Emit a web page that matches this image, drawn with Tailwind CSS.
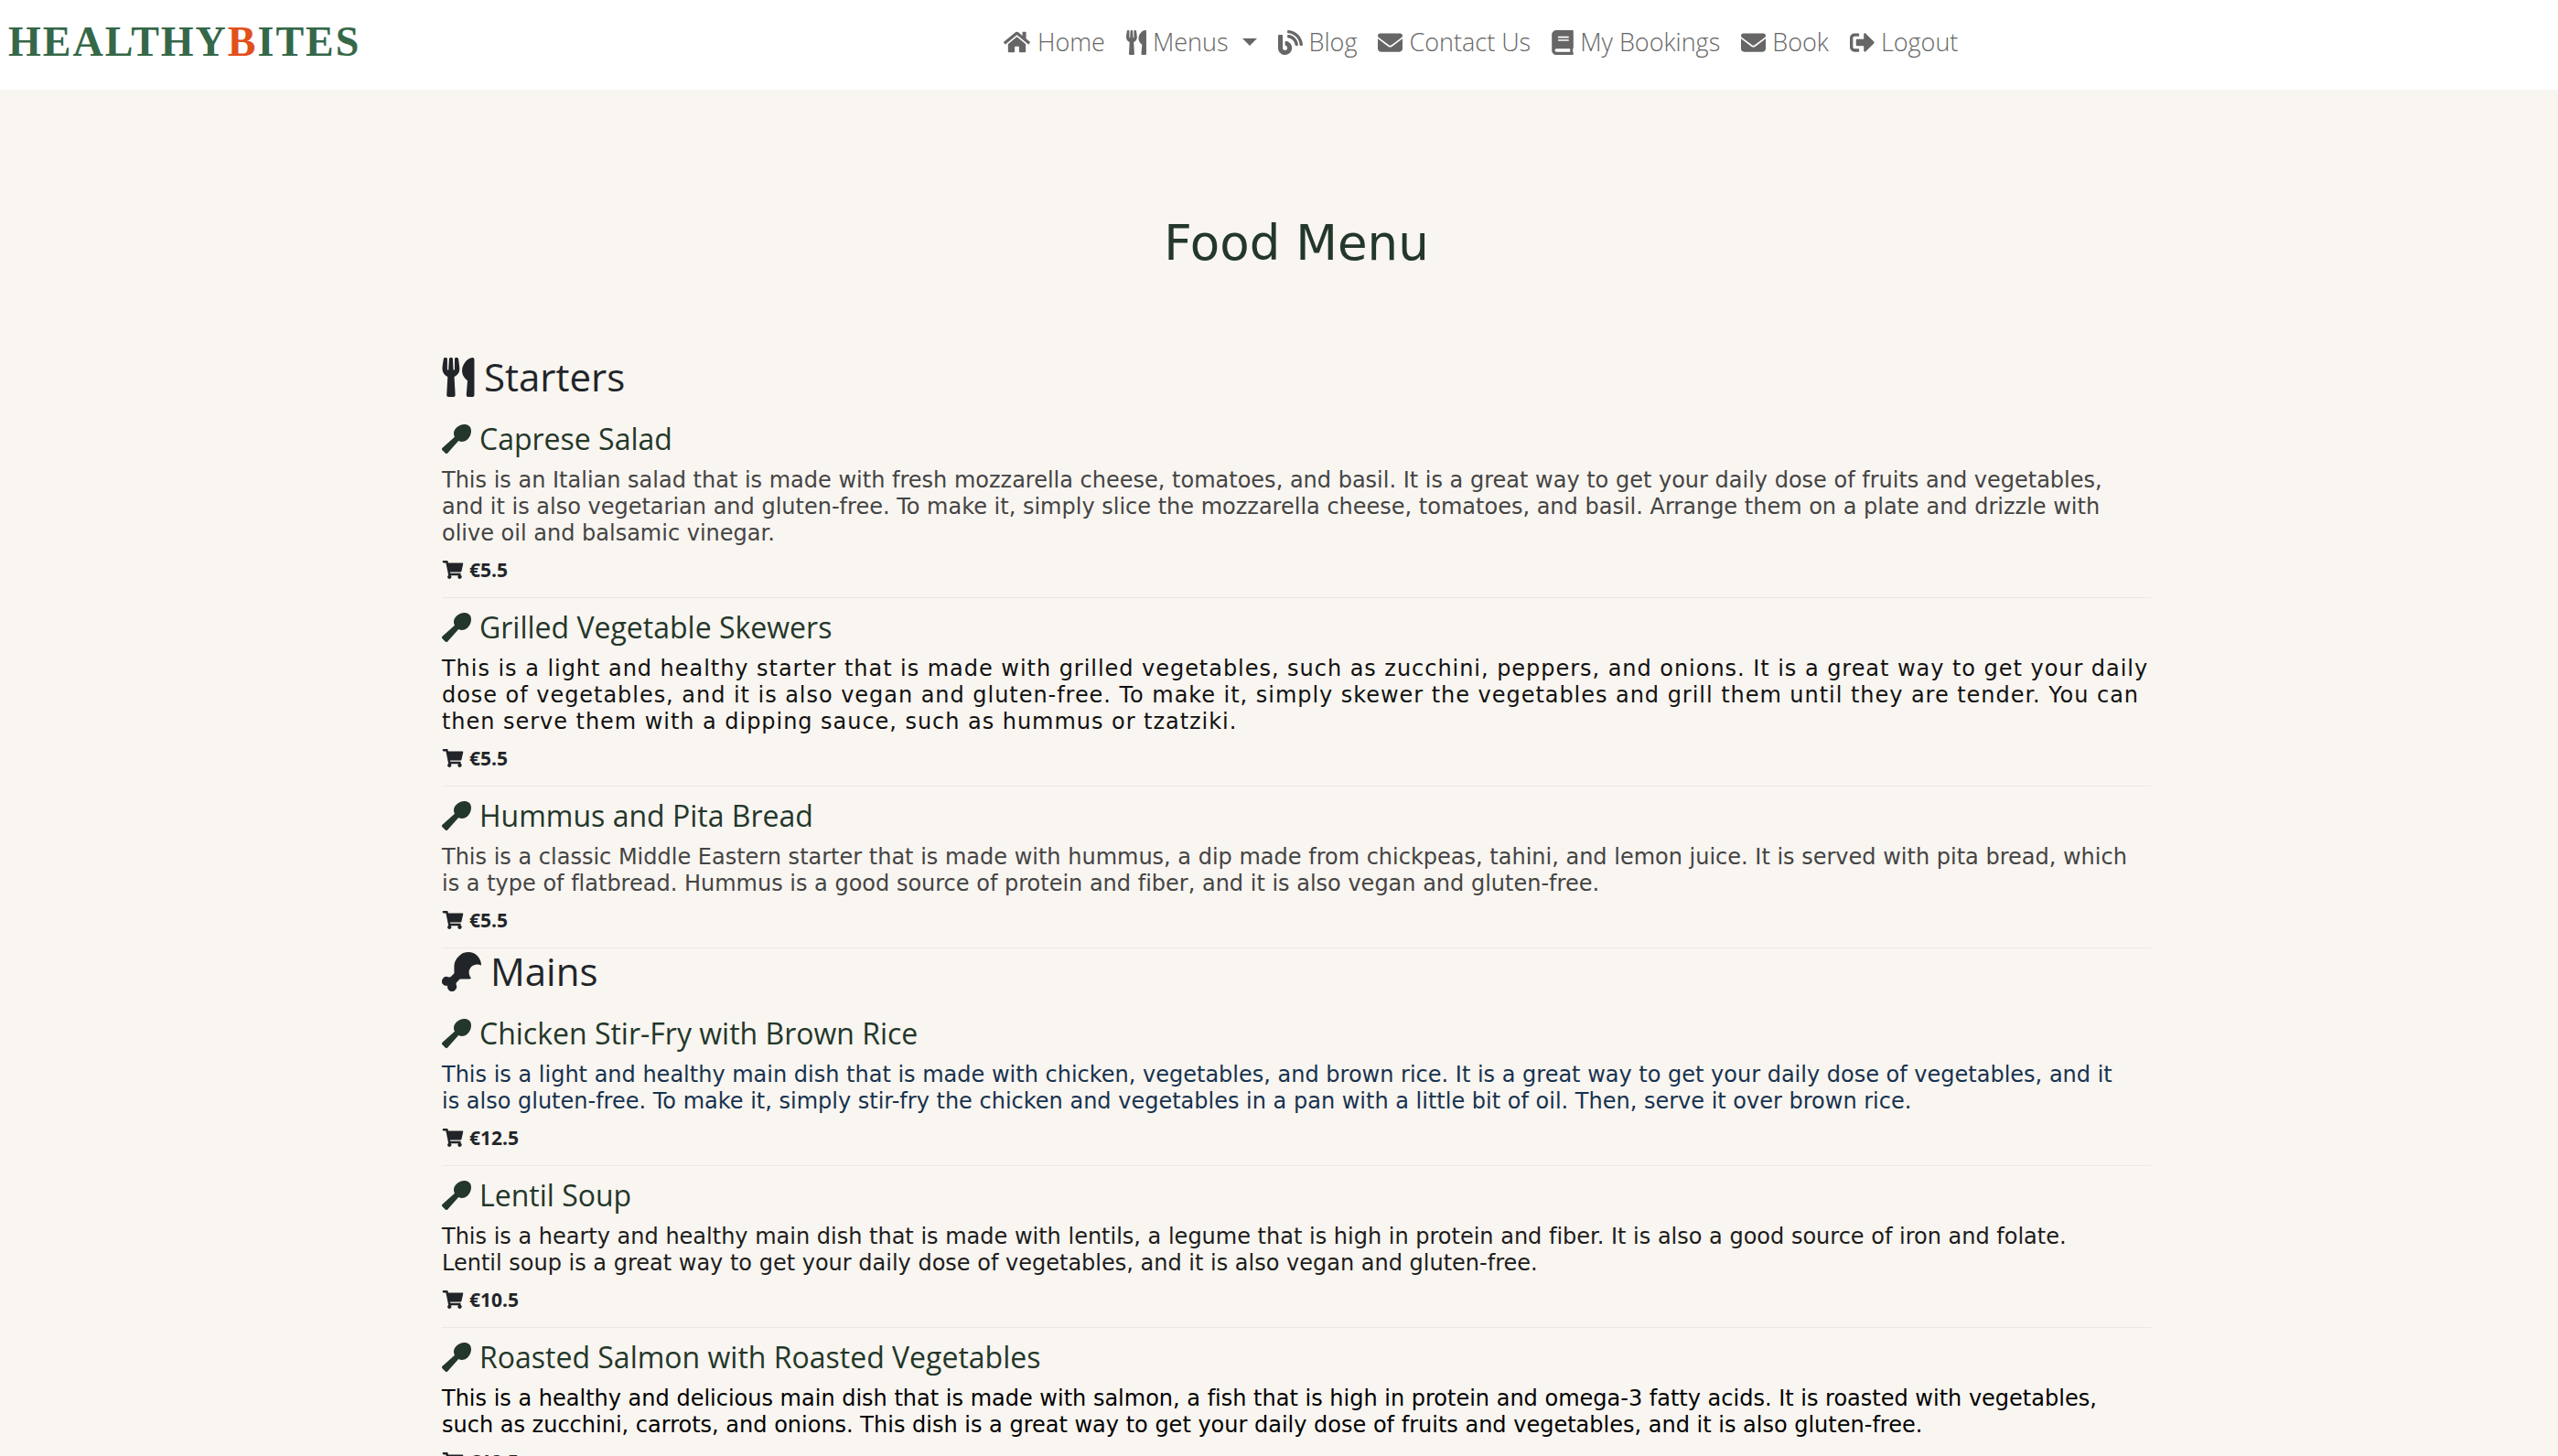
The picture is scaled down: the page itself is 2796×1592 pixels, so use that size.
<!DOCTYPE html>
<html lang="en">
<head>
<meta charset="utf-8">
<title>HealthyBites - Food Menu</title>
<script src="https://cdn.jsdelivr.net/npm/@tailwindcss/browser@4"></script>
</head>
<body class="min-h-screen bg-[#f9f5f0] font-['Open_Sans',sans-serif] text-[#212529] [font-variant-ligatures:none]">
<svg class="hidden" aria-hidden="true">
  <symbol id="home" viewBox="0 0 576 512"><path d="M280.37 148.26L96 300.11V464a16 16 0 0 0 16 16l112.06-.29a16 16 0 0 0 15.92-16V368a16 16 0 0 1 16-16h64a16 16 0 0 1 16 16v95.64a16 16 0 0 0 16 16.05L464 480a16 16 0 0 0 16-16V300L295.67 148.26a12.19 12.19 0 0 0-15.3 0zM571.6 251.47L488 182.56V44.05a12 12 0 0 0-12-12h-56a12 12 0 0 0-12 12v72.61L318.47 43a48 48 0 0 0-61 0L4.34 251.47a12 12 0 0 0-1.6 16.9l25.5 31A12 12 0 0 0 45.15 301l235.22-193.74a12.19 12.19 0 0 1 15.3 0L530.9 301a12 12 0 0 0 16.9-1.6l25.5-31a12 12 0 0 0-1.7-16.93z"/></symbol>
  <symbol id="utensils" viewBox="0 0 416 512"><path d="M207.9 15.2c.8 4.7 16.1 94.5 16.1 128.8 0 52.3-27.8 89.6-68.9 104.6L168 486.7c.7 13.7-10.2 25.3-24 25.3H80c-13.7 0-24.7-11.5-24-25.3l12.9-238.1C27.7 233.6 0 196.2 0 144 0 109.6 15.3 19.9 16.1 15.2 19.3-5.1 61.4-5.4 64 16.3v141.2c1.3 3.4 15.1 3.2 16 0 1.4-25.3 7.9-139.2 8-141.8 3.3-20.8 44.7-20.8 47.9 0 .2 2.7 6.6 116.5 8 141.8.9 3.2 14.8 3.4 16 0V16.3c2.6-21.6 44.8-21.4 48-1.1zm119.2 285.7l-15 185.1c-1.2 14 9.9 26 23.9 26h56c13.3 0 24-10.7 24-24V24c0-13.2-10.7-24-24-24-82.5 0-221.4 178.5-64.9 300.9z"/></symbol>
  <symbol id="blog" viewBox="0 0 512 512"><path d="M172.2 226.8c-14.6-2.9-28.2 8.9-28.2 23.8V301c0 10.2 7.1 18.4 16.7 22 18.2 6.8 31.3 24.4 31.3 45 0 26.5-21.5 48-48 48s-48-21.5-48-48V120c0-13.3-10.7-24-24-24H24c-13.3 0-24 10.7-24 24v248c0 89.5 82.1 160.2 175 140.7 54.4-11.4 98.3-55.4 109.7-109.7 17.4-82.9-37-157.2-112.5-172.2zM209 0c-9.2-.5-17 6.8-17 16v31.6c0 8.5 6.6 15.5 15 15.9 129.4 7 233.4 112 240.9 241.5.5 8.4 7.5 15 15.9 15h32.1c9.2 0 16.5-7.8 16-17C503.4 139.8 372.2 8.6 209 0zm.3 96c-9.3-.7-17.3 6.7-17.3 16.1v32.1c0 8.4 6.5 15.3 14.8 15.9 76.8 6.3 138 68.2 144.9 145.2.8 8.3 7.6 14.7 15.9 14.7h32.2c9.3 0 16.8-8 16.1-17.3-8.4-110.1-96.5-198.2-206.6-206.7z"/></symbol>
  <symbol id="envelope" viewBox="0 0 512 512"><path d="M48 64C21.5 64 0 85.5 0 112c0 15.1 7.1 29.3 19.2 38.4L236.8 313.6c11.4 8.5 27 8.5 38.4 0L492.8 150.4c12.1-9.1 19.2-23.3 19.2-38.4c0-26.5-21.5-48-48-48H48zM0 176V384c0 35.3 28.7 64 64 64H448c35.3 0 64-28.7 64-64V176L294.4 339.2c-22.8 17.1-54 17.1-76.8 0L0 176z"/></symbol>
  <symbol id="book" viewBox="0 0 448 512"><path d="M448 360V24c0-13.3-10.7-24-24-24H96C43 0 0 43 0 96v320c0 53 43 96 96 96h328c13.3 0 24-10.7 24-24v-16c0-7.5-3.5-14.3-8.9-18.7-4.2-15.4-4.2-59.3 0-74.7 5.4-4.3 8.9-11.1 8.9-18.6zM128 134c0-3.3 2.7-6 6-6h212c3.3 0 6 2.7 6 6v20c0 3.3-2.7 6-6 6H134c-3.3 0-6-2.7-6-6v-20zm0 64c0-3.3 2.7-6 6-6h212c3.3 0 6 2.7 6 6v20c0 3.3-2.7 6-6 6H134c-3.3 0-6-2.7-6-6v-20zm253.4 250H96c-17.7 0-32-14.3-32-32 0-17.6 14.4-32 32-32h285.4c-1.9 17.1-1.9 46.9 0 64z"/></symbol>
  <symbol id="logout" viewBox="0 0 512 512"><path d="M497 273L329 441c-15 15-41 4.5-41-17v-96H152c-13.3 0-24-10.7-24-24v-96c0-13.3 10.7-24 24-24h136V88c0-21.4 25.9-32 41-17l168 168c9.3 9.4 9.3 24.6 0 34zM192 436v-40c0-6.6-5.4-12-12-12H96c-17.7 0-32-14.3-32-32V160c0-17.7 14.3-32 32-32h84c6.6 0 12-5.4 12-12V76c0-6.6-5.4-12-12-12H96c-53 0-96 43-96 96v192c0 53 43 96 96 96h84c6.6 0 12-5.4 12-12z"/></symbol>
  <symbol id="cart" viewBox="0 0 576 512"><path d="M528.12 301.319l47.273-208C578.806 78.301 567.391 64 551.99 64H159.208l-9.166-44.81C147.758 8.021 137.93 0 126.529 0H24C10.745 0 0 10.745 0 24v16c0 13.255 10.745 24 24 24h69.883l70.248 343.435C147.325 417.1 136 435.222 136 456c0 30.928 25.072 56 56 56s56-25.072 56-56c0-15.674-6.447-29.835-16.824-40h209.647C430.447 426.165 424 440.326 424 456c0 30.928 25.072 56 56 56s56-25.072 56-56c0-22.172-12.888-41.332-31.579-50.405l5.517-24.276c3.413-15.018-8.002-29.319-23.403-29.319H218.117l-6.545-32h293.145c11.206 0 20.92-7.754 23.403-18.681z"/></symbol>
  <symbol id="spoon" viewBox="0 0 512 512"><path d="M480.1 31.9c-55-55.1-164.9-34.5-227.8 28.5-49.3 49.3-55.1 110-28.8 160.4L9 413.2c-11.6 10.5-12.1 28.5-1 39.5L59.3 504c11 11 29.1 10.5 39.5-1.1l192.4-214.4c50.4 26.3 111.1 20.5 160.4-28.8 63-62.9 83.6-172.8 28.5-227.8z"/></symbol>
  <symbol id="drumstick" viewBox="0 0 512 512"><path d="M462.8 49.57a169.44 169.44 0 0 0-239.5 0C187.82 85 160.13 128 160.13 192v85.83l-40.62 40.59c-9.7 9.69-24 11.07-36.78 6a60.33 60.33 0 0 0-65 98.72C33 438.39 54.24 442.7 73.85 438.21c-4.5 19.6-.18 40.83 15.1 56.1a60.35 60.35 0 0 0 98.8-65c-5.09-12.73-3.72-27 6-36.75L234.36 352h85.89a187.87 187.87 0 0 0 61.89-10c-39.64-43.89-39.83-110.23 1.05-151.07 34.38-34.36 86.76-39.46 128.74-16.8 1.3-44.96-14.81-90.28-49.13-124.56z"/></symbol>
</svg>

<header class="flex h-[98px] items-center bg-white pb-[6px] pl-[9px]">
  <a href="#" class="w-[1088px] font-['Liberation_Serif',serif] text-[46px] font-bold leading-[56px] tracking-[2px] text-[#356849]">HEALTHY<span class="text-[#e2501b]">B</span>ITES</a>
  <nav class="flex items-center gap-[23px] text-[27px] font-light leading-10 text-[#666]">
    <a href="#" class="flex items-center gap-2"><svg class="h-[26px] w-[29px] fill-current"><use href="#home"/></svg>Home</a>
    <button type="button" class="flex items-center gap-[7px]"><svg class="h-[27px] w-[22px] fill-current"><use href="#utensils"/></svg>Menus<svg class="ml-2 h-2 w-4 fill-current" viewBox="0 0 16 8"><path d="M0 0h16L8 8z"/></svg></button>
    <a href="#" class="flex items-center gap-[7px]"><svg class="h-[27px] w-[27px] fill-current"><use href="#blog"/></svg>Blog</a>
    <a href="#" class="flex items-center gap-[7px]"><svg class="h-[27px] w-[27px] fill-current"><use href="#envelope"/></svg>Contact Us</a>
    <a href="#" class="flex items-center gap-[7px]"><svg class="h-[27px] w-[24px] fill-current"><use href="#book"/></svg>My Bookings</a>
    <a href="#" class="flex items-center gap-[7px]"><svg class="h-[27px] w-[27px] fill-current"><use href="#envelope"/></svg>Book</a>
    <a href="#" class="flex items-center gap-[7px]"><svg class="h-[27px] w-[27px] fill-current"><use href="#logout"/></svg>Logout</a>
  </nav>
</header>

<main class="pl-[483px] pr-[445px] pt-[135px]">
  <h1 class="mb-[88px] text-center font-['DejaVu_Sans',sans-serif] text-[53px] leading-[66px] text-[#23372a]">Food Menu</h1>

  <section>
    <h2 class="mb-[11px] flex items-center gap-[10px] text-[42px] leading-[50px]"><svg class="h-[43px] w-9 fill-current"><use href="#utensils"/></svg>Starters</h2>
    <article class="border-b border-[#ebe7e3] pt-3 pb-[18px]">
      <h3 class="mb-[11px] flex items-center gap-[9px] text-[32px] leading-10 text-[#23372a]"><svg class="size-8 fill-current"><use href="#spoon"/></svg>Caprese Salad</h3>
      <p class="mb-[13px] font-['DejaVu_Sans',sans-serif] text-[24px] leading-[29px] text-[#444]">This is an Italian salad that is made with fresh mozzarella cheese, tomatoes, and basil. It is a great way to get your daily dose of fruits and vegetables,<br>and it is also vegetarian and gluten-free. To make it, simply slice the mozzarella cheese, tomatoes, and basil. Arrange them on a plate and drizzle with<br>olive oil and balsamic vinegar.</p>
      <p class="flex items-center gap-[6px] text-[21px] font-bold leading-6"><svg class="h-5 w-6 fill-current"><use href="#cart"/></svg>€5.5</p>
    </article>
    <article class="border-b border-[#ebe7e3] pt-3 pb-[18px]">
      <h3 class="mb-[11px] flex items-center gap-[9px] text-[32px] leading-10 text-[#23372a]"><svg class="size-8 fill-current"><use href="#spoon"/></svg>Grilled Vegetable Skewers</h3>
      <p class="mb-[13px] font-['DejaVu_Sans',sans-serif] text-[24px] leading-[29px] tracking-[0.04em] text-[#111]">This is a light and healthy starter that is made with grilled vegetables, such as zucchini, peppers, and onions. It is a great way to get your daily<br>dose of vegetables, and it is also vegan and gluten-free. To make it, simply skewer the vegetables and grill them until they are tender. You can<br>then serve them with a dipping sauce, such as hummus or tzatziki.</p>
      <p class="flex items-center gap-[6px] text-[21px] font-bold leading-6"><svg class="h-5 w-6 fill-current"><use href="#cart"/></svg>€5.5</p>
    </article>
    <article class="border-b border-[#ebe7e3] pt-3 pb-[18px]">
      <h3 class="mb-[11px] flex items-center gap-[9px] text-[32px] leading-10 text-[#23372a]"><svg class="size-8 fill-current"><use href="#spoon"/></svg>Hummus and Pita Bread</h3>
      <p class="mb-[13px] font-['DejaVu_Sans',sans-serif] text-[24px] leading-[29px] text-[#444]">This is a classic Middle Eastern starter that is made with hummus, a dip made from chickpeas, tahini, and lemon juice. It is served with pita bread, which<br>is a type of flatbread. Hummus is a good source of protein and fiber, and it is also vegan and gluten-free.</p>
      <p class="flex items-center gap-[6px] text-[21px] font-bold leading-6"><svg class="h-5 w-6 fill-current"><use href="#cart"/></svg>€5.5</p>
    </article>
  </section>

  <section>
    <h2 class="mb-[11px] flex items-center gap-[10px] text-[42px] leading-[50px]"><svg class="size-[43px] fill-current"><use href="#drumstick"/></svg>Mains</h2>
    <article class="border-b border-[#ebe7e3] pt-3 pb-[18px]">
      <h3 class="mb-[11px] flex items-center gap-[9px] text-[32px] leading-10 text-[#23372a]"><svg class="size-8 fill-current"><use href="#spoon"/></svg>Chicken Stir-Fry with Brown Rice</h3>
      <p class="mb-[13px] font-['DejaVu_Sans',sans-serif] text-[24px] leading-[29px] text-[#16324f]">This is a light and healthy main dish that is made with chicken, vegetables, and brown rice. It is a great way to get your daily dose of vegetables, and it<br>is also gluten-free. To make it, simply stir-fry the chicken and vegetables in a pan with a little bit of oil. Then, serve it over brown rice.</p>
      <p class="flex items-center gap-[6px] text-[21px] font-bold leading-6"><svg class="h-5 w-6 fill-current"><use href="#cart"/></svg>€12.5</p>
    </article>
    <article class="border-b border-[#ebe7e3] pt-3 pb-[18px]">
      <h3 class="mb-[11px] flex items-center gap-[9px] text-[32px] leading-10 text-[#23372a]"><svg class="size-8 fill-current"><use href="#spoon"/></svg>Lentil Soup</h3>
      <p class="mb-[13px] font-['DejaVu_Sans',sans-serif] text-[24px] leading-[29px] text-[#1c1c1c]">This is a hearty and healthy main dish that is made with lentils, a legume that is high in protein and fiber. It is also a good source of iron and folate.<br>Lentil soup is a great way to get your daily dose of vegetables, and it is also vegan and gluten-free.</p>
      <p class="flex items-center gap-[6px] text-[21px] font-bold leading-6"><svg class="h-5 w-6 fill-current"><use href="#cart"/></svg>€10.5</p>
    </article>
    <article class="border-b border-[#ebe7e3] pt-3 pb-[18px]">
      <h3 class="mb-[11px] flex items-center gap-[9px] text-[32px] leading-10 text-[#23372a]"><svg class="size-8 fill-current"><use href="#spoon"/></svg>Roasted Salmon with Roasted Vegetables</h3>
      <p class="mb-[13px] font-['DejaVu_Sans',sans-serif] text-[24px] leading-[29px] text-black">This is a healthy and delicious main dish that is made with salmon, a fish that is high in protein and omega-3 fatty acids. It is roasted with vegetables,<br>such as zucchini, carrots, and onions. This dish is a great way to get your daily dose of fruits and vegetables, and it is also gluten-free.</p>
      <p class="flex items-center gap-[6px] text-[21px] font-bold leading-6"><svg class="h-5 w-6 fill-current"><use href="#cart"/></svg>€12.5</p>
    </article>
  </section>
</main>
</body>
</html>
